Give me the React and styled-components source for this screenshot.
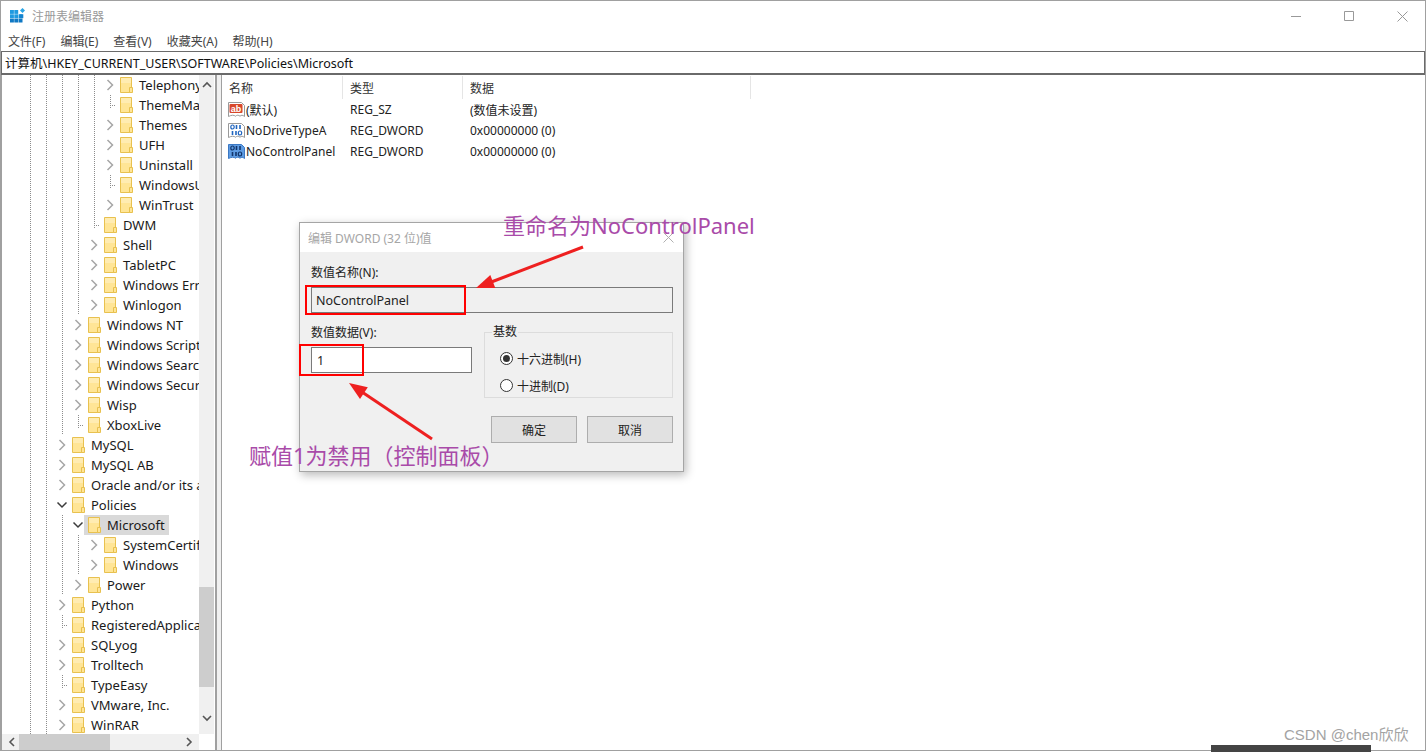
import React from "react";
import styled, { createGlobalStyle } from "styled-components";

const UI_FONT = `"Noto Sans", "Noto Sans CJK SC", sans-serif`;
const DOTS = "repeating-linear-gradient(to bottom, #8c8c8c 0 1px, transparent 1px 2px)";
const DOTS_H = "repeating-linear-gradient(to right, #8c8c8c 0 1px, transparent 1px 2px)";

const GlobalStyle = createGlobalStyle`
  html, body {
    margin: 0;
    padding: 0;
    background: #fff;
    overflow: hidden;
  }
  * {
    box-sizing: border-box;
  }
`;

const Page = styled.div`
  position: relative;
  width: 1426px;
  height: 752px;
  overflow: hidden;
  font-family: ${UI_FONT};
  color: #1a1a1a;
`;

const Frame = styled.div`
  display: flex;
  flex-direction: column;
  width: 100%;
  height: 751px;
  border: 1px solid #a0a0a0;
  background: #fff;
`;

const TitleBar = styled.div`
  display: flex;
  align-items: center;
  height: 30px;
  flex: none;
  padding-left: 8px;
  gap: 7px;
`;

const TitleText = styled.span`
  font-size: 12px;
  color: #9a9a9a;
  flex: 1;
`;

const WinButton = styled.div`
  display: flex;
  align-items: center;
  justify-content: center;
  width: 46px;
  height: 30px;
  color: #999;
`;

const MenuBar = styled.div`
  display: flex;
  align-items: center;
  flex: none;
  height: 20px;
  padding-left: 7px;
  gap: 15px;
`;

const MenuItem = styled.span`
  font-size: 12px;
  color: #444;
`;

const AddressBar = styled.div`
  display: flex;
  align-items: center;
  flex: none;
  height: 24px;
  padding-left: 3px;
  border: 1px solid #6a6a6a;
  border-bottom-width: 2px;
  margin-right: 0;
  font-size: 12.5px;
  color: #111;
`;

const Panes = styled.div`
  display: flex;
  flex: 1;
  min-height: 0;
  background: #f0f0f0;
`;

const TreePane = styled.div`
  display: grid;
  grid-template-columns: 197px 15px;
  grid-template-rows: 1fr 16px;
  width: 216px;
  flex: none;
  background: #fff;
  border-left: 1px solid #a0a0a0;
  border-right: 2px solid #a0a0a0;
  padding-right: 1px;
`;

const TreeList = styled.div`
  overflow: hidden;
  padding-left: 20px;
`;

const TreeRow = styled.div`
  display: flex;
  align-items: center;
  height: 20px;
  white-space: nowrap;
`;

const Guide = styled.span`
  flex: none;
  width: 16px;
  height: 20px;
  background: ${DOTS} 8px 0 / 1px 100% no-repeat;
`;

const ChevronCell = styled.span`
  display: flex;
  flex: none;
  align-items: center;
  justify-content: center;
  width: 14px;
  height: 20px;
  margin-left: 1px;
  margin-right: -1px;
`;

const LeafCell = styled.span`
  flex: none;
  width: 14px;
  height: 20px;
  background:
    ${DOTS} 8px 0 / 1px 13px no-repeat,
    ${DOTS_H} 8px 10px / 7px 1px no-repeat;
`;

const Node = styled.span`
  display: inline-flex;
  align-items: center;
  gap: 6px;
  height: 20px;
  padding: 0 4px;
  font-size: 13px;
  color: #1a1a1a;
  background: ${(p) => (p.$selected ? "#d9d9d9" : "transparent")};
`;

const FolderIcon = styled.svg`
  flex: none;
  width: 13px;
  height: 16px;
`;

const VScroll = styled.div`
  display: flex;
  flex-direction: column;
  align-items: center;
  justify-content: space-between;
  padding: 6px 0 12px;
  background: #f0f0f0;
  position: relative;
`;

const VThumb = styled.div`
  position: absolute;
  top: 512px;
  left: 0;
  width: 100%;
  height: 100px;
  background: #cdcdcd;
`;

const HScroll = styled.div`
  display: flex;
  align-items: center;
  justify-content: space-between;
  padding: 0 6px;
  background: #f0f0f0;
`;

const HThumb = styled.div`
  width: 91px;
  height: 16px;
  background: #cdcdcd;
  margin-left: 4px;
  margin-right: auto;
`;

const Corner = styled.div`
  background: #fff;
`;

const ListPane = styled.div`
  flex: 1;
  margin-left: 4px;
  background: #fff;
  border-left: 1px solid #a0a0a0;
  border-bottom: 0;
`;

const ListHeader = styled.div`
  display: grid;
  grid-template-columns: 121px 120px 288px;
  height: 23px;
  margin-top: 1px;
`;

const HeaderCell = styled.div`
  display: flex;
  align-items: center;
  padding-left: 7px;
  font-size: 12px;
  color: #333;
  border-right: 1px solid #e5e5e5;
`;

const ListRow = styled.div`
  display: grid;
  grid-template-columns: 121px 120px 288px;
  height: 21px;
  align-items: center;
  font-size: 12px;
  color: #222;
`;

const NameCell = styled.div`
  display: flex;
  align-items: center;
  gap: 1px;
  padding-left: 6px;
  white-space: nowrap;
`;

const ValueCell = styled.div`
  padding-left: 7px;
  white-space: nowrap;
`;

const Dialog = styled.div`
  position: absolute;
  left: 299px;
  top: 222px;
  width: 385px;
  height: 250px;
  display: flex;
  flex-direction: column;
  background: #f0f0f0;
  border: 1px solid #a5a5a5;
  box-shadow: 2px 3px 9px rgba(0, 0, 0, 0.28);
`;

const DialogTitle = styled.div`
  display: flex;
  align-items: center;
  justify-content: space-between;
  flex: none;
  height: 29px;
  padding: 0 9px 0 8px;
  background: #fff;
  font-size: 12px;
  color: #a6a6a6;
`;

const DialogBody = styled.div`
  display: grid;
  grid-template-columns: 161px 189px;
  column-gap: 12px;
  padding: 13px 10px 0 11px;
  font-size: 12px;
  color: #222;
`;

const FieldLabel = styled.div`
  height: 16px;
  line-height: 16px;
`;

const NameField = styled.div`
  grid-column: 1 / -1;
  margin-bottom: 12px;
`;

const TextBox = styled.div`
  display: flex;
  align-items: center;
  height: 26px;
  margin-top: 6px;
  padding-left: ${(p) => (p.$readOnly ? "4px" : "5px")};
  border: 1px solid #7a7a7a;
  background: ${(p) => (p.$readOnly ? "#f0f0f0" : "#fff")};
  font-size: 12.5px;
`;

const BaseGroup = styled.fieldset`
  height: 73px;
  margin: 0;
  padding: 0 0 0 15px;
  border: 1px solid #dcdcdc;
  border-radius: 0;
`;

const BaseLegend = styled.legend`
  margin-left: -8px;
  padding: 0 1px;
  font-size: 12px;
  line-height: 14px;
`;

const RadioRow = styled.div`
  display: flex;
  align-items: center;
  gap: 4px;
  height: 27px;
  &:first-of-type {
    margin-top: 6px;
  }
`;

const RadioDot = styled.span`
  display: flex;
  align-items: center;
  justify-content: center;
  width: 13px;
  height: 13px;
  border: 1px solid #333;
  border-radius: 50%;
  background: #fff;
  &::after {
    content: "";
    display: ${(p) => (p.$checked ? "block" : "none")};
    width: 7px;
    height: 7px;
    border-radius: 50%;
    background: #333;
  }
`;

const ButtonRow = styled.div`
  grid-column: 1 / -1;
  display: flex;
  justify-content: flex-end;
  gap: 10px;
  margin-top: 18px;
`;

const DialogButton = styled.button`
  width: 86px;
  height: 27px;
  padding: 0;
  border: 1px solid #adadad;
  background: #e1e1e1;
  font-family: inherit;
  font-size: 12px;
  color: #222;
`;

const RedBox = styled.div`
  position: absolute;
  left: ${(p) => p.$x}px;
  top: ${(p) => p.$y}px;
  width: ${(p) => p.$w}px;
  height: ${(p) => p.$h}px;
  border: 2px solid #f00;
`;

const Note = styled.div`
  position: absolute;
  left: ${(p) => p.$x}px;
  top: ${(p) => p.$y}px;
  font-size: 22px;
  line-height: 30px;
  color: #a94ba9;
  white-space: nowrap;
`;

const ArrowLayer = styled.svg`
  position: absolute;
  left: 0;
  top: 0;
  width: 1426px;
  height: 752px;
  pointer-events: none;
`;

const Watermark = styled.div`
  position: absolute;
  left: 1284px;
  top: 725px;
  font-family: "Liberation Sans", "Noto Sans CJK SC", sans-serif;
  font-size: 15px;
  line-height: 20px;
  color: #a3a3a3;
`;

const BottomStrip = styled.div`
  position: absolute;
  left: 1211px;
  bottom: 0;
  width: 160px;
  height: 7px;
  background: #444;
`;

const RegLogo = () => (
  <svg width="16" height="16" viewBox="0 0 16 16">
    {[0, 1, 2].map((r) =>
      [0, 1, 2].map((c) =>
        r === 0 && c === 2 ? null : (
          <rect key={`${r}${c}`} x={1 + c * 4.3} y={2 + r * 4.3} width="3.9" height="3.9" fill={r === 2 ? "#0f78c4" : "#1f9ae0"} />
        )
      )
    )}
    <rect x="10.4" y="6.3" width="3.9" height="3.9" fill="#1283cf" />
    <path d="M13.5 0l2.5 2.5-2.5 2.5-2.5-2.5z" fill="#2aa6e6" />
  </svg>
);

const Chevron = ({ open }) =>
  open ? (
    <svg width="12" height="12" viewBox="0 0 12 12">
      <path d="M1.5 3.5L6 8l4.5-4.5" fill="none" stroke="#3c3c3c" strokeWidth="1.5" />
    </svg>
  ) : (
    <svg width="12" height="12" viewBox="0 0 12 12">
      <path d="M3.5 1L8.5 6l-5 5" fill="none" stroke="#a6a6a6" strokeWidth="1.5" />
    </svg>
  );

const Folder = () => (
  <FolderIcon viewBox="0 0 13 16">
    <path d="M.5.5h11v15H.5z" fill="#ffe596" stroke="#e8c14f" />
    <path d="M1 1h10v5H1z" fill="#fff0bd" opacity=".7" />
    <path d="M9.5 10.5h3v5h-3z" fill="#ffe596" stroke="#e8c14f" />
  </FolderIcon>
);

const PageIcon = ({ selected, children }) => (
  <svg width="17" height="17" viewBox="0 0 17 17">
    <path
      d="M.5 1.5h13l3 3v11c-2-1.6-3-1.6-4.5-.3-1.500-1.300-3-1.300-4.500 0-1.500-1.300-4-1.300-7 .3z"
      fill={selected ? "#5e9ce3" : "#fff"}
      stroke={selected ? "#3b78c4" : "#9a9a9a"}
    />
    {children}
  </svg>
);

const StringIcon = () => (
  <PageIcon>
    <rect x="1.500" y="3" width="13" height="9" rx="1" fill="#d8472b" />
    <text x="8" y="10.600" textAnchor="middle" fontSize="9" fontWeight="700" fontFamily="Liberation Sans, sans-serif" fill="#fff">
      ab
    </text>
  </PageIcon>
);

const DwordIcon = ({ selected }) => {
  const ink = selected ? "#12356b" : "#2166c0";
  return (
    <PageIcon selected={selected}>
      <ellipse cx="4.500" cy="5" rx="1.700" ry="2" fill="none" stroke={ink} strokeWidth="1.200" />
      <path d="M8.500 3v4M12 3v4" stroke={ink} strokeWidth="1.600" />
      <path d="M4.500 9v4M8 9v4" stroke={ink} strokeWidth="1.600" />
      <ellipse cx="12" cy="11" rx="1.700" ry="2" fill="none" stroke={ink} strokeWidth="1.200" />
    </PageIcon>
  );
};

const TREE = [
  { d: 3, name: "Telephony", kind: "closed" },
  { d: 3, name: "ThemeManager", kind: "leaf" },
  { d: 3, name: "Themes", kind: "closed" },
  { d: 3, name: "UFH", kind: "closed" },
  { d: 3, name: "Uninstall", kind: "closed" },
  { d: 3, name: "WindowsUpdate", kind: "leaf" },
  { d: 3, name: "WinTrust", kind: "closed" },
  { d: 2, name: "DWM", kind: "leaf" },
  { d: 2, name: "Shell", kind: "closed" },
  { d: 2, name: "TabletPC", kind: "closed" },
  { d: 2, name: "Windows Error Reporting", kind: "closed" },
  { d: 2, name: "Winlogon", kind: "closed" },
  { d: 1, name: "Windows NT", kind: "closed" },
  { d: 1, name: "Windows Script Host", kind: "closed" },
  { d: 1, name: "Windows Search", kind: "closed" },
  { d: 1, name: "Windows Security", kind: "closed" },
  { d: 1, name: "Wisp", kind: "closed" },
  { d: 1, name: "XboxLive", kind: "leaf" },
  { d: 0, name: "MySQL", kind: "closed" },
  { d: 0, name: "MySQL AB", kind: "closed" },
  { d: 0, name: "Oracle and/or its affiliates", kind: "closed" },
  { d: 0, name: "Policies", kind: "open" },
  { d: 1, name: "Microsoft", kind: "open", selected: true },
  { d: 2, name: "SystemCertificates", kind: "closed" },
  { d: 2, name: "Windows", kind: "closed" },
  { d: 1, name: "Power", kind: "closed" },
  { d: 0, name: "Python", kind: "closed" },
  { d: 0, name: "RegisteredApplications", kind: "leaf" },
  { d: 0, name: "SQLyog", kind: "closed" },
  { d: 0, name: "Trolltech", kind: "closed" },
  { d: 0, name: "TypeEasy", kind: "leaf" },
  { d: 0, name: "VMware, Inc.", kind: "closed" },
  { d: 0, name: "WinRAR", kind: "closed" },
];

const VALUES = [
  { icon: <StringIcon />, name: "(默认)", type: "REG_SZ", data: "(数值未设置)" },
  { icon: <DwordIcon />, name: "NoDriveTypeA", type: "REG_DWORD", data: "0x00000000 (0)" },
  { icon: <DwordIcon selected />, name: "NoControlPanel", type: "REG_DWORD", data: "0x00000000 (0)" },
];

const MENU = ["文件(F)", "编辑(E)", "查看(V)", "收藏夹(A)", "帮助(H)"];

const App = () => {
  return (
    <Page>
      <GlobalStyle />
      <Frame>
        <TitleBar>
          <RegLogo />
          <TitleText>注册表编辑器</TitleText>
          <WinButton>
            <svg width="10" height="10" viewBox="0 0 10 10"><path d="M0 5.500h10" stroke="currentColor" /></svg>
          </WinButton>
          <WinButton>
            <svg width="10" height="10" viewBox="0 0 10 10"><path d="M.5.500h9v9h-9z" fill="none" stroke="currentColor" /></svg>
          </WinButton>
          <WinButton>
            <svg width="11" height="11" viewBox="0 0 11 11"><path d="M.5.500l10 10M10.500.500l-10 10" stroke="currentColor" /></svg>
          </WinButton>
        </TitleBar>
        <MenuBar>
          {MENU.map((m) => (
            <MenuItem key={m}>{m}</MenuItem>
          ))}
        </MenuBar>
        <AddressBar>计算机\HKEY_CURRENT_USER\SOFTWARE\Policies\Microsoft</AddressBar>
        <Panes>
          <TreePane>
            <TreeList>
              {TREE.map((n) => (
                <TreeRow key={n.name + n.d}>
                  {Array.from({ length: n.d + 2 }, (_, i) => (
                    <Guide key={i} />
                  ))}
                  {n.kind === "leaf" ? (
                    <LeafCell />
                  ) : (
                    <ChevronCell>
                      <Chevron open={n.kind === "open"} />
                    </ChevronCell>
                  )}
                  <Node $selected={n.selected}>
                    <Folder />
                    {n.name}
                  </Node>
                </TreeRow>
              ))}
            </TreeList>
            <VScroll>
              <svg width="10" height="7" viewBox="0 0 10 7"><path d="M1 6l4-4 4 4" fill="none" stroke="#555" strokeWidth="1.600" /></svg>
              <svg width="10" height="7" viewBox="0 0 10 7"><path d="M1 1l4 4 4-4" fill="none" stroke="#555" strokeWidth="1.600" /></svg>
              <VThumb />
            </VScroll>
            <HScroll>
              <svg width="7" height="10" viewBox="0 0 7 10"><path d="M6 1L2 5l4 4" fill="none" stroke="#555" strokeWidth="1.600" /></svg>
              <HThumb />
              <svg width="7" height="10" viewBox="0 0 7 10"><path d="M1 1l4 4-4 4" fill="none" stroke="#555" strokeWidth="1.600" /></svg>
            </HScroll>
            <Corner />
          </TreePane>
          <ListPane>
            <ListHeader>
              <HeaderCell>名称</HeaderCell>
              <HeaderCell>类型</HeaderCell>
              <HeaderCell>数据</HeaderCell>
            </ListHeader>
            {VALUES.map((v) => (
              <ListRow key={v.name}>
                <NameCell>
                  {v.icon}
                  {v.name}
                </NameCell>
                <ValueCell>{v.type}</ValueCell>
                <ValueCell>{v.data}</ValueCell>
              </ListRow>
            ))}
          </ListPane>
        </Panes>
      </Frame>

      <Dialog>
        <DialogTitle>
          编辑 DWORD (32 位)值
          <svg width="11" height="11" viewBox="0 0 11 11"><path d="M.5.500l10 10M10.500.500l-10 10" stroke="#b0b0b0" /></svg>
        </DialogTitle>
        <DialogBody>
          <NameField>
            <FieldLabel>数值名称(N):</FieldLabel>
            <TextBox $readOnly>NoControlPanel</TextBox>
          </NameField>
          <div>
            <FieldLabel>数值数据(V):</FieldLabel>
            <TextBox>1</TextBox>
          </div>
          <BaseGroup>
            <BaseLegend>基数</BaseLegend>
            <RadioRow>
              <RadioDot $checked />
              十六进制(H)
            </RadioRow>
            <RadioRow>
              <RadioDot />
              十进制(D)
            </RadioRow>
          </BaseGroup>
          <ButtonRow>
            <DialogButton>确定</DialogButton>
            <DialogButton>取消</DialogButton>
          </ButtonRow>
        </DialogBody>
      </Dialog>

      <Note $x={503} $y={210}>重命名为NoControlPanel</Note>
      <Note $x={249} $y={440}>赋值1为禁用（控制面板）</Note>
      <RedBox $x={305} $y={285} $w={161} $h={30} />
      <RedBox $x={299} $y={344} $w={65} $h={32} />
      <ArrowLayer viewBox="0 0 1426 752">
        <path d="M583 247L490 282.500" stroke="#ee2020" strokeWidth="3" />
        <path d="M476 288l19.300-.1-5-13z" fill="#ee2020" />
        <path d="M432 439L362 392" stroke="#ee2020" strokeWidth="3" />
        <path d="M349 383l18.800 4.300-7.800 11.600z" fill="#ee2020" />
      </ArrowLayer>
      <Watermark>CSDN @chen欣欣</Watermark>
      <BottomStrip />
    </Page>
  );
};

export default App;
